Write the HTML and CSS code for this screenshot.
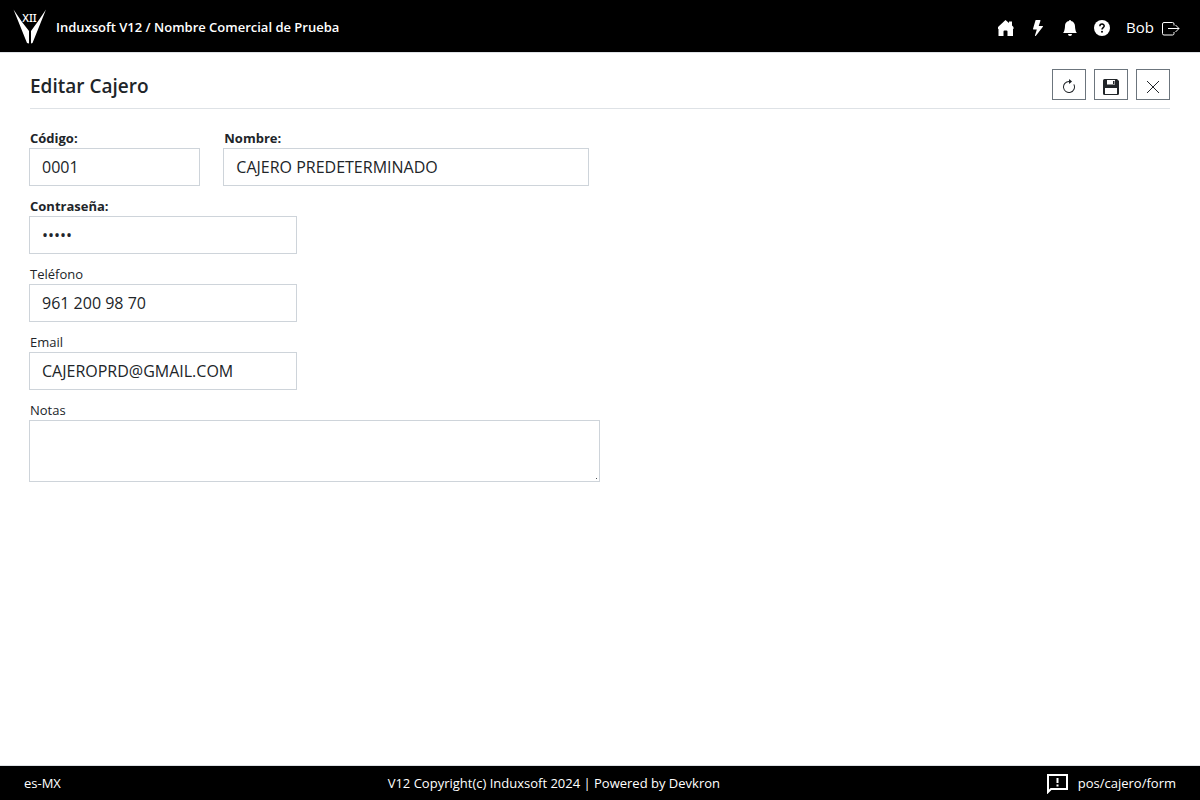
FILE: index.html
```html
<!DOCTYPE html>
<html lang="es-MX">
<head>
<meta charset="UTF-8">
<meta name="viewport" content="width=device-width, initial-scale=1.0">
<title>Editar Cajero</title>
<link rel="stylesheet" href="styles.css">
</head>
<body>

<header class="topbar">
    <a class="brand" href="#">
        <svg class="logo" width="34" height="36" viewBox="0 0 34 36" fill="#fff" aria-hidden="true">
            <path d="M0.500 0.500L9 13L16 22V34.500L14 34Z"/>
            <path d="M33 0.500L24.500 13L18 22V34.500L19.500 34Z"/>
            <text x="16.500" y="12.500" text-anchor="middle" class="logo-text">XII</text>
        </svg>
        <span>Induxsoft V12 / Nombre Comercial de Prueba</span>
    </a>
    <nav class="topbar-nav">
        <a href="#" aria-label="Inicio">
            <svg width="16" height="16" viewBox="0 0 16 16" fill="currentColor"><path d="M7.500 0L0 7V9H.5V16H5.500V11.500a1 1 0 0 1 1-1H8.500a1 1 0 0 1 1 1V16H15V9H15.500V7L14 5.500V1.500H11V3Z"/></svg>
        </a>
        <a href="#" aria-label="Accesos">
            <svg width="16" height="16" viewBox="0 0 16 16" fill="currentColor"><path d="M5.520.359A.5.500 0 0 1 6 0h4a.5.500 0 0 1 .474.658L8.694 6H12.500a.5.500 0 0 1 .395.807l-7 9a.5.500 0 0 1-.873-.454L6.823 9.500H3.500a.5.500 0 0 1-.48-.641z"/></svg>
        </a>
        <a href="#" aria-label="Notificaciones">
            <svg width="16" height="16" viewBox="0 0 16 16" fill="currentColor"><path d="M8 16a2 2 0 0 0 2-2H6a2 2 0 0 0 2 2m.995-14.901a1 1 0 1 0-1.990 0A5 5 0 0 0 3 6c0 1.098-.5 6-2 7h14c-1.500-1-2-5.902-2-7 0-2.420-1.720-4.440-4.005-4.901"/></svg>
        </a>
        <a href="#" aria-label="Ayuda">
            <svg width="16" height="16" viewBox="0 0 16 16" fill="currentColor"><circle cx="8" cy="8" r="8"/><path d="M5.900 6.200C5.900 3.400 10.200 3.500 10.200 6C10.200 7.600 8 7.600 8 9.600" fill="none" stroke="#000" stroke-width="1.500"/><circle cx="8" cy="11.700" r="1" fill="#000"/></svg>
        </a>
        <a class="user" href="#">
            <span>Bob</span>
            <svg width="18" height="18" viewBox="0 0 18 18" fill="none" stroke="currentColor"><path d="M12 6.500V5a1.500 1.500 0 0 0-1.500-1.500H2A1.500 1.500 0 0 0 .5 5v9.500A1.500 1.500 0 0 0 2 16h8.500a1.500 1.500 0 0 0 1.500-1.500V13M6 9.500H17M13.500 6L17 9.500L13.500 13"/></svg>
        </a>
    </nav>
</header>

<main class="content">
    <div class="page-head">
        <h1>Editar Cajero</h1>
        <div class="tools">
            <button type="button" aria-label="Actualizar">
                <svg width="16" height="16" viewBox="0 0 16 16" fill="currentColor"><path d="M8 3a5 5 0 1 0 4.546 2.914.5.5 0 0 1 .908-.417A6 6 0 1 1 8 2z"/><path d="M8 4.466V.534a.25.25 0 0 1 .41-.192l2.360 1.966c.12.1.12.284 0 .384L8.410 4.658A.25.25 0 0 1 8 4.466"/></svg>
            </button>
            <button type="submit" form="cajero" aria-label="Guardar">
                <svg width="16" height="16" viewBox="0 0 16 16" fill="currentColor"><path fill-rule="evenodd" d="M1.500 0H14L16 2V14.500a1.500 1.500 0 0 1-1.500 1.500H1.500A1.500 1.500 0 0 1 0 14.500V1.500A1.500 1.500 0 0 1 1.500 0ZM4 1V5.500H12V1ZM2 9V15H14V9Z"/><path d="M10 2h1.500v3H10z"/></svg>
            </button>
            <button type="button" aria-label="Cerrar">
                <svg width="16" height="16" viewBox="0 0 16 16" fill="none" stroke="currentColor"><path d="M2 2L14 14M14 2L2 14"/></svg>
            </button>
        </div>
    </div>

    <form id="cajero" class="form">
        <div class="row">
            <div class="field field-code">
                <label class="required" for="codigo">Código:</label>
                <input type="text" id="codigo" value="0001">
            </div>
            <div class="field field-name">
                <label class="required" for="nombre">Nombre:</label>
                <input type="text" id="nombre" value="CAJERO PREDETERMINADO">
            </div>
        </div>
        <div class="field field-medium">
            <label class="required" for="contrasena">Contraseña:</label>
            <input type="password" id="contrasena" value="12345">
        </div>
        <div class="field field-medium">
            <label for="telefono">Teléfono</label>
            <input type="tel" id="telefono" value="961 200 98 70">
        </div>
        <div class="field field-medium">
            <label for="email">Email</label>
            <input type="email" id="email" value="CAJEROPRD@GMAIL.COM">
        </div>
        <div class="field field-notes">
            <label for="notas">Notas</label>
            <textarea id="notas" rows="2"></textarea>
        </div>
    </form>
</main>

<footer class="footer">
    <span>es-MX</span>
    <span>V12 Copyright(c) Induxsoft 2024 | Powered by Devkron</span>
    <a class="route" href="#">
        <svg width="21" height="21" viewBox="0 0 21 21" fill="none" stroke="currentColor" stroke-width="2" aria-hidden="true"><path d="M1 19V2H20V16H4Z"/><path d="M10.500 5V10M10.500 11.500V13.500"/></svg>
        <span>pos/cajero/form</span>
    </a>
</footer>

</body>
</html>
```
FILE: styles.css
```css
* {
    box-sizing: border-box;
}
body {
    display: flex;
    flex-direction: column;
    min-height: 100vh;
    margin: 0;
    background-color: #fff;
    color: #212529;
    font-family: "Segoe UI", "Open Sans", sans-serif;
    font-size: 13px;
}
a {
    color: inherit;
    text-decoration: none;
}
svg {
    display: block;
}

/* Top bar */
.topbar {
    display: flex;
    justify-content: space-between;
    align-items: center;
    height: 53px;
    padding: 1px 20px 0 13px;
    background-color: #000;
    border-bottom: 1px solid #dee2e6;
    color: #fff;
}
.brand {
    display: flex;
    align-items: center;
    gap: 9px;
    font-weight: 600;
}
.logo-text {
    font-family: "Noto Sans", sans-serif;
    font-size: 11px;
    font-weight: 500;
}
.topbar-nav {
    display: flex;
    align-items: center;
    gap: 16px;
}
.topbar-nav svg {
    margin-top: 2px;
}
.user {
    display: flex;
    align-items: center;
    gap: 8px;
    font-size: 15px;
}

/* Page */
.content {
    flex: 1;
    padding: 16px 30px;
}
.page-head {
    display: flex;
    justify-content: space-between;
    align-items: flex-start;
    height: 40px;
    border-bottom: 1px solid #dee2e6;
}
h1 {
    margin: 4px 0 0;
    font-size: 19px;
    font-weight: 600;
    line-height: 26px;
}
.tools {
    display: flex;
    gap: 8px;
}
.tools button {
    display: flex;
    justify-content: center;
    align-items: center;
    width: 34px;
    height: 31px;
    padding: 4px 0 0;
    border: 1px solid #6c757d;
    background-color: #fff;
    color: #212529;
    cursor: pointer;
}

/* Form */
.form {
    display: flex;
    flex-direction: column;
    gap: 10px;
    margin: 19px -1px 0;
}
.row {
    display: flex;
    gap: 23px;
}
.field {
    display: flex;
    flex-direction: column;
}
.field-code {
    width: 15%;
}
.field-name {
    width: 32%;
}
.field-medium {
    width: 23.5%;
}
.field-notes {
    width: 50%;
}
label {
    padding-left: 1px;
    line-height: 20px;
}
.required {
    font-weight: 700;
}
input,
textarea {
    width: 100%;
    height: 38px;
    padding: 6px 12px;
    border: 1px solid #ced4da;
    background-color: #fff;
    color: #212529;
    font-family: inherit;
    font-size: 16px;
    line-height: 24px;
}
textarea {
    height: 62px;
    resize: vertical;
}
textarea::-webkit-resizer {
    background: linear-gradient(#495057, #495057) 12px 12px / 1px 1px no-repeat;
}

/* Footer */
.footer {
    display: flex;
    justify-content: space-between;
    align-items: center;
    height: 35px;
    padding: 0 24px;
    background-color: #000;
    border-top: 1px solid #dee2e6;
    color: #fff;
}
.route {
    display: flex;
    align-items: center;
    gap: 10px;
}
```
